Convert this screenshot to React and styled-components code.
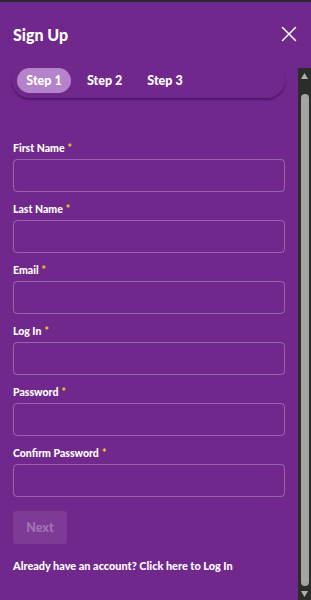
import React, { useEffect, useRef } from 'react'
import styled, { createGlobalStyle } from 'styled-components'

const GlobalStyle = createGlobalStyle`
  html, body {
    margin: 0;
    padding: 0;
    background: #71288d;
  }
  * {
    box-sizing: border-box;
  }
`

const Panel = styled.div`
  width: 311px;
  height: 600px;
  display: flex;
  flex-direction: column;
  background: #71288d;
  border-top: 2px solid #2a2833;
  font-family: Lato, 'Noto Sans', sans-serif;
  color: #fff;
  overflow: hidden;
`

const Header = styled.header`
  height: 66px;
  flex-shrink: 0;
  display: flex;
  align-items: center;
  justify-content: space-between;
  padding: 0 13px 2px 13px;
`

const Title = styled.h1`
  margin: 0;
  font-size: 16px;
  font-weight: 900;
`

const CloseButton = styled.button`
  background: none;
  border: none;
  padding: 0;
  width: 16px;
  height: 16px;
  display: flex;
  cursor: pointer;
  margin-right: 1px;
`

const Body = styled.div`
  flex: 1;
  min-height: 0;
  display: flex;
`

const Scroller = styled.div`
  flex: 1;
  overflow-y: scroll;
  scrollbar-width: none;
  &::-webkit-scrollbar {
    display: none;
  }
`

const ScrollBar = styled.div`
  width: 13px;
  flex-shrink: 0;
  background: #2b2d2b;
  display: flex;
  flex-direction: column;
  align-items: center;
  padding: 5px 0 3px;
`

const Thumb = styled.div`
  flex: 1;
  width: 8px;
  margin: 15px 0 5px;
  border-radius: 4px;
  background: #a5a5a5;
`

const Content = styled.div`
  padding: 0 0 29px 13px;
  width: 285px;
`

const TabBar = styled.nav`
  margin-left: -1px;
  height: 36px;
  display: flex;
  align-items: flex-start;
  padding: 6px 6px 0 5px;
  border-radius: 20px;
  box-shadow: 0 2px 2px rgba(40, 0, 60, 0.45);
`

const Tab = styled.button`
  height: 25px;
  width: ${({ $active }) => ($active ? '54px' : 'auto')};
  padding: 0;
  margin-right: ${({ $active }) => ($active ? '16px' : '25px')};
  border: none;
  border-radius: 13px;
  background: ${({ $active }) => ($active ? '#b583c9' : 'transparent')};
  color: #fff;
  font-family: inherit;
  font-size: 12.5px;
  font-weight: 900;
  cursor: pointer;
`

const Form = styled.form`
  padding-top: 43px;
  display: flex;
  flex-direction: column;
`

const Field = styled.div`
  display: flex;
  flex-direction: column;
  margin-bottom: 10px;
`

const Label = styled.label`
  font-size: 10.5px;
  font-weight: 900;
  line-height: 14px;
  margin-bottom: 4px;
`

const Star = styled.span`
  color: #f3d21a;
  margin-left: 3px;
`

const Input = styled.input`
  height: 33px;
  width: 100%;
  background: transparent;
  border: 1px solid rgba(255, 255, 255, 0.28);
  border-radius: 4px;
  color: #fff;
  font-family: inherit;
  font-size: 12px;
  padding: 0 10px;
  outline: none;
`

const NextButton = styled.button`
  margin-top: 4px;
  align-self: flex-start;
  width: 54px;
  height: 33px;
  border: none;
  border-radius: 3px;
  background: rgba(255, 255, 255, 0.09);
  color: rgba(255, 255, 255, 0.3);
  font-family: inherit;
  font-size: 12.5px;
  font-weight: 900;
`

const Footer = styled.p`
  margin: 15px 0 0;
  font-size: 10.9px;
  font-weight: 900;
  line-height: 14px;
`

const Arrow = ({ down }) => (
  <svg width="7" height="6" viewBox="0 0 7 6">
    <path d={down ? 'M0 0 H7 L3.5 6 Z' : 'M0 6 H7 L3.5 0 Z'} fill="#b0b0b0" />
  </svg>
)

const fields = ['First Name', 'Last Name', 'Email', 'Log In', 'Password', 'Confirm Password']

export default function App() {
  const scrollRef = useRef(null)

  useEffect(() => {
    if (scrollRef.current) scrollRef.current.scrollTop = 6
  }, [])

  return (
    <>
      <GlobalStyle />
      <Panel>
        <Header>
          <Title>Sign Up</Title>
          <CloseButton aria-label="Close">
            <svg width="16" height="16" viewBox="0 0 16 16">
              <path d="M1.5 1.5 L14.5 14.5 M14.5 1.5 L1.5 14.5" stroke="#fff" strokeWidth="1.5" strokeLinecap="round" />
            </svg>
          </CloseButton>
        </Header>
        <Body>
          <Scroller ref={scrollRef}>
            <Content>
              <TabBar>
                <Tab $active>Step 1</Tab>
                <Tab>Step 2</Tab>
                <Tab>Step 3</Tab>
              </TabBar>
              <Form onSubmit={(e) => e.preventDefault()}>
                {fields.map((name) => (
                  <Field key={name}>
                    <Label>
                      {name}
                      <Star>*</Star>
                    </Label>
                    <Input type={name.includes('Password') ? 'password' : 'text'} />
                  </Field>
                ))}
                <NextButton type="submit" disabled>
                  Next
                </NextButton>
              </Form>
              <Footer>Already have an account? Click here to Log In</Footer>
            </Content>
          </Scroller>
          <ScrollBar aria-hidden="true">
            <Arrow />
            <Thumb />
            <Arrow down />
          </ScrollBar>
        </Body>
      </Panel>
    </>
  )
}
